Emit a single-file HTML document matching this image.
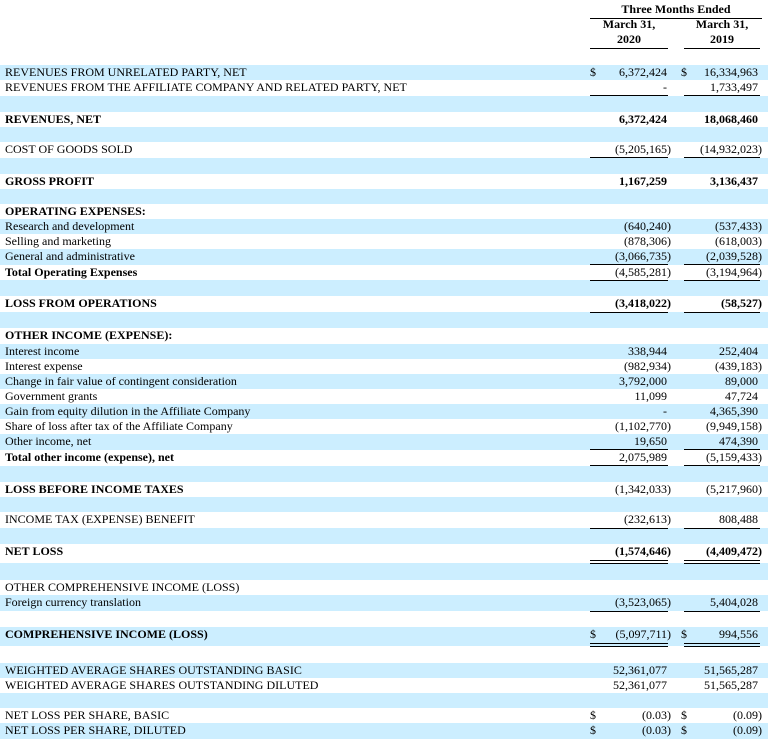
<!DOCTYPE html>
<html><head><meta charset="utf-8"><style>
*{margin:0;padding:0;box-sizing:border-box}
body{width:768px;height:739px;position:relative;background:#fff;font-family:"Liberation Serif",serif;color:#000;overflow:hidden}
.r{position:absolute;left:0;width:768px;font-size:12px;white-space:nowrap}
.b{background:#cceeff}
.r .l{position:absolute;left:5px;top:0}
.u{letter-spacing:0}
.bd{font-weight:bold}
.r .a,.r .c{position:absolute;top:0;font-size:12px}
.a{right:97px}.a.n{right:101px}
.c{right:6px}.c.n{right:10px}
.d1,.d2{position:absolute;top:0;font-size:12px}
.d1{left:590px}.d2{left:681px}
.ln{position:absolute;height:1px;background:#000}
.h{position:absolute;font-weight:bold;font-size:12px;text-align:center}
</style></head><body>
<div class="h" style="left:590px;width:172px;top:2px">Three Months Ended</div>
<div class="ln" style="left:590px;width:172px;top:18px"></div>
<div class="h" style="left:590px;width:78px;top:17px;line-height:15px">March 31,<br>2020</div>
<div class="h" style="left:683px;width:78px;top:17px;line-height:15px">March 31,<br>2019</div>
<div class="ln" style="left:590px;width:78px;top:48px"></div>
<div class="ln" style="left:684px;width:76px;top:48px"></div>

<div class="r b" style="top:65px;height:15px;line-height:15px"><span class="l u">REVENUES FROM UNRELATED PARTY, NET</span><span class="d1">$</span><span class="a n">6,372,424</span><span class="d2">$</span><span class="c n">16,334,963</span></div>
<div class="r" style="top:80px;height:16px;line-height:15px"><span class="l u">REVENUES FROM THE AFFILIATE COMPANY AND RELATED PARTY, NET</span><span class="a n">-</span><span class="c n">1,733,497</span></div>
<div class="r b" style="top:96px;height:16px"></div>
<div class="r" style="top:112px;height:15px;line-height:15px"><span class="l bd u">REVENUES, NET</span><span class="a n bd">6,372,424</span><span class="c n bd">18,068,460</span></div>
<div class="r b" style="top:127px;height:15px"></div>
<div class="r" style="top:142px;height:16px;line-height:15px"><span class="l u">COST OF GOODS SOLD</span><span class="a">(5,205,165)</span><span class="c">(14,932,023)</span></div>
<div class="r b" style="top:158px;height:16px"></div>
<div class="r" style="top:174px;height:15px;line-height:15px"><span class="l bd u">GROSS PROFIT</span><span class="a n bd">1,167,259</span><span class="c n bd">3,136,437</span></div>
<div class="r b" style="top:189px;height:15px"></div>
<div class="r" style="top:204px;height:15px;line-height:15px"><span class="l bd">OPERATING EXPENSES:</span></div>
<div class="r b" style="top:219px;height:15px;line-height:15px"><span class="l">Research and development</span><span class="a">(640,240)</span><span class="c">(537,433)</span></div>
<div class="r" style="top:234px;height:15px;line-height:15px"><span class="l">Selling and marketing</span><span class="a">(878,306)</span><span class="c">(618,003)</span></div>
<div class="r b" style="top:249px;height:16px;line-height:15px"><span class="l">General and administrative</span><span class="a">(3,066,735)</span><span class="c">(2,039,528)</span></div>
<div class="r" style="top:265px;height:15px;line-height:15px"><span class="l bd">Total Operating Expenses</span><span class="a">(4,585,281)</span><span class="c">(3,194,964)</span></div>
<div class="r b" style="top:280px;height:16px"></div>
<div class="r" style="top:296px;height:16px;line-height:15px"><span class="l bd u">LOSS FROM OPERATIONS</span><span class="a bd">(3,418,022)</span><span class="c bd">(58,527)</span></div>
<div class="r b" style="top:312px;height:16px"></div>
<div class="r" style="top:328px;height:16px;line-height:15px"><span class="l bd">OTHER INCOME (EXPENSE):</span></div>
<div class="r b" style="top:344px;height:15px;line-height:15px"><span class="l">Interest income</span><span class="a n">338,944</span><span class="c n">252,404</span></div>
<div class="r" style="top:359px;height:15px;line-height:15px"><span class="l">Interest expense</span><span class="a">(982,934)</span><span class="c">(439,183)</span></div>
<div class="r b" style="top:374px;height:15px;line-height:15px"><span class="l">Change in fair value of contingent consideration</span><span class="a n">3,792,000</span><span class="c n">89,000</span></div>
<div class="r" style="top:389px;height:15px;line-height:15px"><span class="l">Government grants</span><span class="a n">11,099</span><span class="c n">47,724</span></div>
<div class="r b" style="top:404px;height:15px;line-height:15px"><span class="l">Gain from equity dilution in the Affiliate Company</span><span class="a n">-</span><span class="c n">4,365,390</span></div>
<div class="r" style="top:419px;height:15px;line-height:15px"><span class="l">Share of loss after tax of the Affiliate Company</span><span class="a">(1,102,770)</span><span class="c">(9,949,158)</span></div>
<div class="r b" style="top:434px;height:16px;line-height:15px"><span class="l">Other income, net</span><span class="a n">19,650</span><span class="c n">474,390</span></div>
<div class="r" style="top:450px;height:16px;line-height:15px"><span class="l bd">Total other income (expense), net</span><span class="a n">2,075,989</span><span class="c">(5,159,433)</span></div>
<div class="r b" style="top:466px;height:16px"></div>
<div class="r" style="top:482px;height:15px;line-height:15px"><span class="l bd u">LOSS BEFORE INCOME TAXES</span><span class="a">(1,342,033)</span><span class="c">(5,217,960)</span></div>
<div class="r b" style="top:497px;height:15px"></div>
<div class="r" style="top:512px;height:16px;line-height:15px"><span class="l u">INCOME TAX (EXPENSE) BENEFIT</span><span class="a">(232,613)</span><span class="c n">808,488</span></div>
<div class="r b" style="top:528px;height:16px"></div>
<div class="r" style="top:544px;height:19px;line-height:15px"><span class="l bd u">NET LOSS</span><span class="a bd">(1,574,646)</span><span class="c bd">(4,409,472)</span></div>
<div class="r b" style="top:563px;height:17px"></div>
<div class="r" style="top:580px;height:15px;line-height:15px"><span class="l u">OTHER COMPREHENSIVE INCOME (LOSS)</span></div>
<div class="r b" style="top:595px;height:16px;line-height:15px"><span class="l">Foreign currency translation</span><span class="a">(3,523,065)</span><span class="c n">5,404,028</span></div>
<div class="r" style="top:611px;height:16px"></div>
<div class="r b" style="top:627px;height:19px;line-height:15px"><span class="l bd u">COMPREHENSIVE INCOME (LOSS)</span><span class="d1">$</span><span class="a">(5,097,711)</span><span class="d2">$</span><span class="c n">994,556</span></div>
<div class="r" style="top:646px;height:17px"></div>
<div class="r b" style="top:663px;height:15px;line-height:15px"><span class="l u">WEIGHTED AVERAGE SHARES OUTSTANDING BASIC</span><span class="a n">52,361,077</span><span class="c n">51,565,287</span></div>
<div class="r" style="top:678px;height:15px;line-height:15px"><span class="l u">WEIGHTED AVERAGE SHARES OUTSTANDING DILUTED</span><span class="a n">52,361,077</span><span class="c n">51,565,287</span></div>
<div class="r b" style="top:693px;height:15px"></div>
<div class="r" style="top:708px;height:15px;line-height:15px"><span class="l u">NET LOSS PER SHARE, BASIC</span><span class="d1">$</span><span class="a">(0.03)</span><span class="d2">$</span><span class="c">(0.09)</span></div>
<div class="r b" style="top:723px;height:16px;line-height:15px"><span class="l u">NET LOSS PER SHARE, DILUTED</span><span class="d1">$</span><span class="a">(0.03)</span><span class="d2">$</span><span class="c">(0.09)</span></div>

<div class="ln" style="left:590px;width:78px;top:95px"></div><div class="ln" style="left:684px;width:76px;top:95px"></div>
<div class="ln" style="left:590px;width:78px;top:157px"></div><div class="ln" style="left:684px;width:76px;top:157px"></div>
<div class="ln" style="left:590px;width:78px;top:264px"></div><div class="ln" style="left:684px;width:76px;top:264px"></div>
<div class="ln" style="left:590px;width:78px;top:280px"></div><div class="ln" style="left:684px;width:76px;top:280px"></div>
<div class="ln" style="left:590px;width:78px;top:312px"></div><div class="ln" style="left:684px;width:76px;top:312px"></div>
<div class="ln" style="left:590px;width:78px;top:449px"></div><div class="ln" style="left:684px;width:76px;top:449px"></div>
<div class="ln" style="left:590px;width:78px;top:465px"></div><div class="ln" style="left:684px;width:76px;top:465px"></div>
<div class="ln" style="left:590px;width:78px;top:528px"></div><div class="ln" style="left:684px;width:76px;top:528px"></div>
<div class="ln" style="left:590px;width:78px;top:560px"></div><div class="ln" style="left:684px;width:76px;top:560px"></div>
<div class="ln" style="left:590px;width:78px;top:563px"></div><div class="ln" style="left:684px;width:76px;top:563px"></div>
<div class="ln" style="left:590px;width:78px;top:611px"></div><div class="ln" style="left:684px;width:76px;top:611px"></div>
<div class="ln" style="left:590px;width:78px;top:643px"></div><div class="ln" style="left:684px;width:76px;top:643px"></div>
<div class="ln" style="left:590px;width:78px;top:646px"></div><div class="ln" style="left:684px;width:76px;top:646px"></div>
</body></html>
